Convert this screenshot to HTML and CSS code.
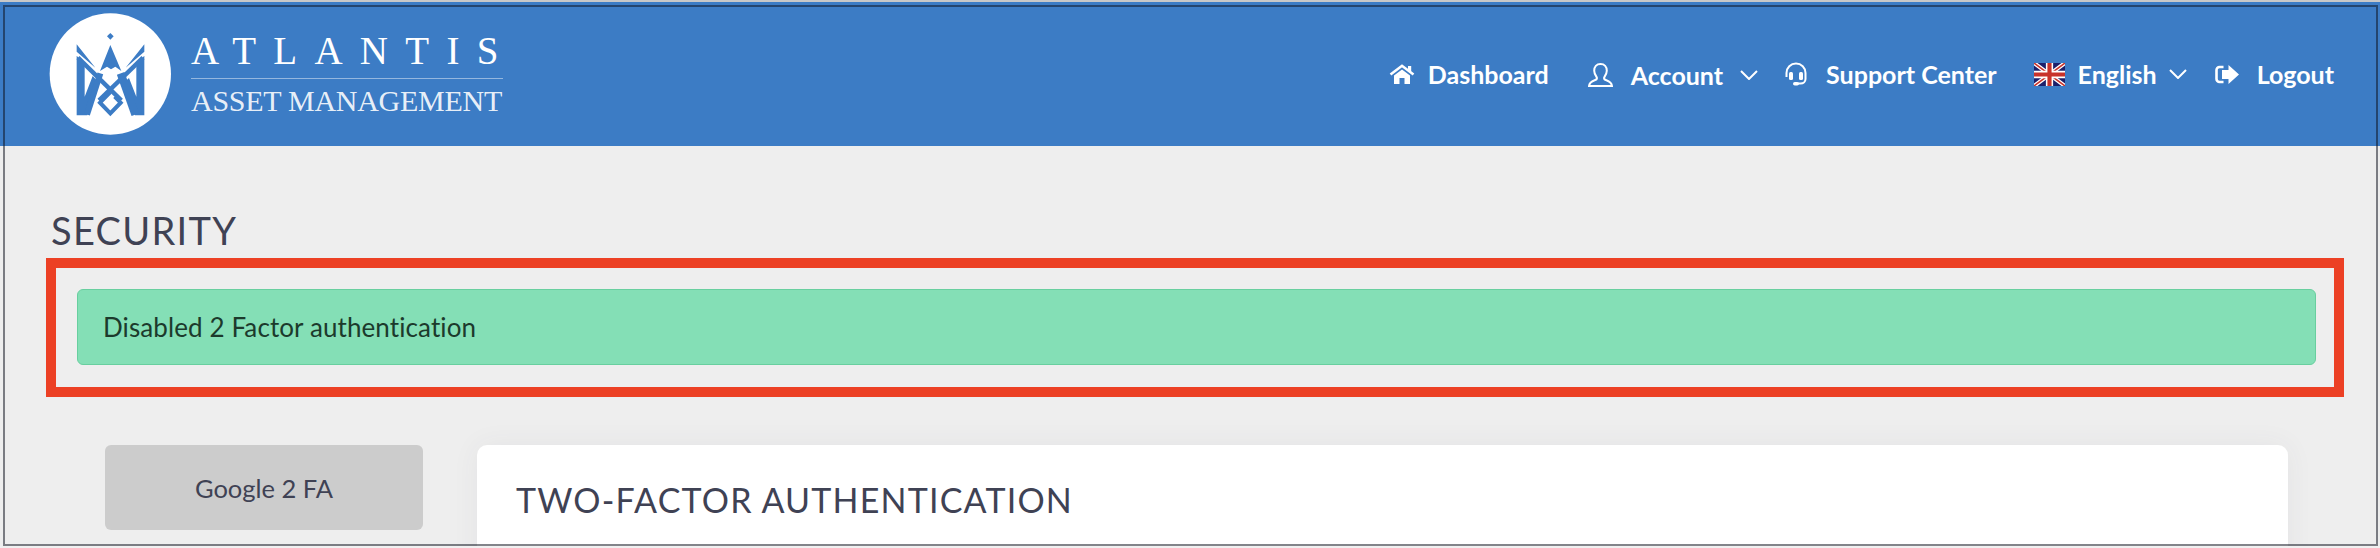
FILE: index.html
```html
<!DOCTYPE html>
<html lang="en">
<head>
  <meta charset="UTF-8" />
  <meta name="viewport" content="width=device-width, initial-scale=1.0"/>
  <title>Security</title>
  <link rel="stylesheet" href="styles.css">
</head>
<body>
  <div class="page">

    <!-- Top bar -->
    <header class="topbar">
      <a class="brand" href="#">
        <svg class="brand-mark" viewBox="0 0 420 390">
          <circle cx="211" cy="192" r="182" fill="#fff"/>
          <path d="M211 69l10 10-10 10-10-10z" fill="#3c7cc5"/>
          <path d="M110 103l56 70-56-48zM313 103l-56 70 56-48z" fill="#3c7cc5"/>
          <path d="M211 105l33 78-18-13-13 8-12-8-21 13z" fill="#3c7cc5"/>
          <path d="M110 137l24 25v98l24-62 14 15-30 103h-32zM313 137l-24 25v98l-22-56-14 13 32 99h28z" fill="#3c7cc5"/>
          <g fill="none" stroke="#3c7cc5">
            <path d="M114 143l130 128" stroke-width="13"/>
            <path d="M309 143l-132 128" stroke-width="13"/>
            <path d="M181 190l-40 124" stroke-width="18"/>
            <path d="M242 190l44 124" stroke-width="24"/>
            <path d="M211 246l-31 32 31 32 31-32-18-18" stroke-width="12"/>
          </g>
        </svg>
        <span class="brand-text">
          <span class="brand-name">ATLANTIS</span>
          <span class="brand-sub">ASSET MANAGEMENT</span>
        </span>
      </a>

      <nav class="nav">
        <a class="nav-item" href="#">
          <svg class="icon icon-home" viewBox="0 0 26 20">
            <path d="M1.500 10.500L13 1.800l11.500 8.700" fill="none" stroke="#fff" stroke-width="2.600"/>
            <path d="M19 2h3.200v6L19 5.500zM5 11.500L13 5.500l8 6V20h-5.500v-6h-5v6H5z" fill="#fff"/>
          </svg>
          Dashboard
        </a>
        <a class="nav-item nav-account" href="#">
          <svg class="icon icon-user" viewBox="0 0 25 24">
            <path d="M12.500 1c-4 0-6.300 3-6.300 6.700 0 3 1.500 5 2.500 6.500.6 1.100 0 2.100-1 2.600-2.200.9-6.200 1.500-6.700 6.200h23c-.5-4.700-4.500-5.300-6.700-6.200-1-.5-1.600-1.500-1-2.600 1-1.500 2.500-3.500 2.500-6.500C18.800 4 16.500 1 12.500 1z" fill="none" stroke="#fff" stroke-width="2"/>
          </svg>
          Account
          <svg class="chevron" viewBox="0 0 18 10"><path d="M1 1l8 8 8-8" fill="none" stroke="#fff" stroke-width="2"/></svg>
        </a>
        <a class="nav-item nav-support" href="#">
          <svg class="icon icon-support" viewBox="0 0 24 24">
            <path d="M2.500 15v-4a9.500 9.500 0 0 1 19 0v6c0 2.500-2 4.500-5 4.500h-3" fill="none" stroke="#fff" stroke-width="2"/>
            <rect x="5" y="10" width="4" height="8" rx="1.500" fill="#fff"/>
            <rect x="15" y="10" width="4" height="8" rx="1.500" fill="#fff"/>
            <rect x="9" y="20" width="6" height="3.600" rx="1.800" fill="#fff"/>
          </svg>
          Support Center
        </a>
        <a class="nav-item nav-lang" href="#">
          <svg class="flag" viewBox="0 0 60 44" preserveAspectRatio="none">
            <rect width="60" height="44" fill="#1c1f6b"/>
            <path d="M0 0l60 44M60 0L0 44" stroke="#fff" stroke-width="8"/>
            <path d="M0 0l60 44M60 0L0 44" stroke="#c8322b" stroke-width="3"/>
            <path d="M30 0v44M0 22h60" stroke="#fff" stroke-width="14"/>
            <path d="M30 0v44M0 22h60" stroke="#c8322b" stroke-width="8"/>
          </svg>
          English
          <svg class="chevron chevron-lang" viewBox="0 0 18 10"><path d="M1 1l8 8 8-8" fill="none" stroke="#fff" stroke-width="2"/></svg>
        </a>
        <a class="nav-item nav-logout" href="#">
          <svg class="icon icon-logout" viewBox="0 0 24 19">
            <path d="M8.500 2H4.500a3 3 0 0 0-3 3v9a3 3 0 0 0 3 3h4" fill="none" stroke="#fff" stroke-width="2.600"/>
            <path d="M13.500 0L24 9.500 13.500 19v-5H7V5h6.500z" fill="#fff"/>
          </svg>
          Logout
        </a>
      </nav>
    </header>

    <!-- Content -->
    <main class="content">
      <h1 class="page-title">SECURITY</h1>

      <div class="highlight">
        <div class="alert">Disabled 2 Factor authentication</div>
      </div>

      <div class="panel-row">
        <a class="tab-btn" href="#">Google 2 FA</a>
        <section class="card">
          <h2 class="card-title">TWO-FACTOR AUTHENTICATION</h2>
        </section>
      </div>
    </main>

    <div class="frame"></div>
  </div>
</body>
</html>
```

FILE: styles.css
```css
html {
  background: #f0f0f0;
}
body {
  margin: 0;
  font-family: Lato, "Open Sans", sans-serif;
  color: #3f4254;
}
a {
  color: inherit;
  text-decoration: none;
}
.page {
  position: relative;
  height: 544px;
  border-top: 2px solid #c8c8c8;
  background: #eee;
  overflow: hidden;
}
.frame {
  position: absolute;
  top: 3px;
  left: 3px;
  right: 2px;
  bottom: 0;
  border: 2px solid rgba(15, 20, 30, 0.52);
  pointer-events: none;
}

/* top bar */
.topbar {
  display: flex;
  align-items: center;
  justify-content: space-between;
  height: 144px;
  padding: 0 46px 0 40px;
  background: #3c7cc5;
  box-sizing: border-box;
  color: #fff;
}
.brand {
  display: flex;
  align-items: center;
}
.brand-mark {
  width: 140px;
  height: 130px;
  margin-top: 2px;
}
.brand-text {
  display: flex;
  flex-direction: column;
  width: 312px;
  margin-left: 11px;
  font-family: "Liberation Serif", serif;
  white-space: nowrap;
}
.brand-name {
  font-size: 39px;
  line-height: 42px;
  letter-spacing: 17.300px;
  padding-bottom: 6px;
  border-bottom: 1px solid rgba(255, 255, 255, 0.45);
}
.brand-sub {
  margin-top: 5px;
  font-size: 30px;
  line-height: 34px;
  letter-spacing: -0.270px;
  color: rgba(255, 255, 255, 0.9);
}
.nav {
  display: flex;
  align-items: center;
}
.nav-item {
  display: flex;
  align-items: center;
  font-size: 25px;
  font-weight: 700;
  white-space: nowrap;
}
.nav-account {
  margin-left: 39px;
  padding-top: 2px;
}
.nav-support {
  margin-left: 26px;
}
.nav-lang {
  margin-left: 37px;
}
.nav-logout {
  margin-left: 28px;
}
.icon {
  flex: none;
  margin-right: 18px;
}
.icon-home {
  width: 26px;
  height: 20px;
  margin-right: 13px;
}
.icon-user {
  width: 25px;
  height: 24px;
}
.icon-support {
  width: 24px;
  height: 24px;
}
.icon-logout {
  width: 24px;
  height: 19px;
}
.flag {
  flex: none;
  width: 31px;
  height: 23px;
  margin-right: 13px;
}
.chevron {
  flex: none;
  width: 18px;
  height: 10px;
  margin-left: 17px;
}
.chevron-lang {
  margin-left: 12px;
}

/* content */
.content {
  padding: 0 36px 0 46px;
}
.page-title {
  height: 50px;
  margin: 0;
  padding: 62px 0 0 5px;
  font-size: 38px;
  font-weight: 400;
  letter-spacing: 1.300px;
  line-height: 44px;
  box-sizing: content-box;
}
.highlight {
  padding: 21px 18px 22px 21px;
  border: 10px solid #ec4024;
}
.alert {
  height: 76px;
  padding: 0 25px;
  display: flex;
  align-items: center;
  background: #84dfb6;
  border: 1px solid #68cf9f;
  border-radius: 6px;
  box-sizing: border-box;
  font-size: 26px;
  font-weight: 400;
  letter-spacing: 0.100px;
  color: #1c3a2c;
}
.panel-row {
  display: flex;
  gap: 54px;
  margin: 48px 56px 0 59px;
  align-items: flex-start;
}
.tab-btn {
  flex: none;
  display: flex;
  align-items: center;
  justify-content: center;
  width: 318px;
  height: 85px;
  background: #ccc;
  border-radius: 6px;
  font-size: 25.500px;
}
.card {
  flex: 1;
  height: 200px;
  padding: 35px 39px;
  background: #fff;
  border-radius: 10px;
  box-shadow: 0 0 28px rgba(60, 60, 80, 0.06);
  box-sizing: border-box;
}
.card-title {
  margin: 0;
  font-size: 34px;
  font-weight: 400;
  letter-spacing: 1.200px;
  line-height: 40px;
}
```
